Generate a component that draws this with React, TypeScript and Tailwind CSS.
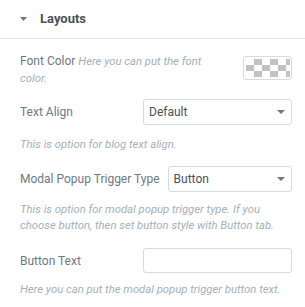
const font = { fontFamily: "Roboto, 'Liberation Sans', sans-serif" };

function Caret({ w = 8 }: { w?: number }) {
  return (
    <svg width={w} height="4" viewBox="0 0 8 4" preserveAspectRatio="none" className="shrink-0">
      <path d="M0 0h8L4 4z" fill="#6d7882" />
    </svg>
  );
}

function Checker() {
  const cells = [];
  for (let r = 0; r < 3; r++) {
    for (let c = 0; c < 6; c++) {
      if ((r + c) % 2 === 1) cells.push(<rect key={`${r}-${c}`} x={c * 8} y={r * 6} width="8" height="6" fill="#c2c2c2" />);
    }
  }
  return (
    <svg width="44" height="18" viewBox="0 0 44 18">
      {cells}
    </svg>
  );
}

function Select({ value }: { value: string }) {
  return (
    <div className="flex h-[26px] flex-1 items-center justify-between rounded-[3px] border border-[#d5dadf] bg-white pl-[5px] pr-[6px] text-[12px] text-[#495157]">
      <span>{value}</span>
      <Caret />
    </div>
  );
}

export default function App() {
  return (
    <div className="w-[305px] h-[307px] bg-white" style={font}>
      <div className="flex h-[39px] items-center gap-[13px] border-b border-[#e6e9ec] pl-5">
        <Caret w={7} />
        <span className="text-[13px] font-bold text-[#495157]">Layouts</span>
      </div>

      <div className="pl-5 pr-[13px] pt-[17px]">
        <div className="flex items-start justify-between">
          <p className="-mt-[3px] w-[190px] text-[12px] leading-[17px] text-[#6d7882]">
            Font Color{" "}
            <span className="text-[11.3px] italic text-[#a4afb7]">Here you can put the font color.</span>
          </p>
          <div className="flex h-[24px] w-[49px] items-center justify-center rounded-[3px] border border-[#d5dadf]">
            <Checker />
          </div>
        </div>

        <div className="mt-[12px] flex items-center">
          <span className="w-[123px] text-[12px] text-[#6d7882]">Text Align</span>
          <Select value="Default" />
        </div>
        <p className="mt-[12px] text-[11.3px] leading-[16px] italic text-[#a4afb7]">This is option for blog text align.</p>

        <div className="mt-[13px] flex items-center gap-[8px]">
          <span className="text-[12px] text-[#6d7882]">Modal Popup Trigger Type</span>
          <Select value="Button" />
        </div>
        <p className="mt-[10px] text-[11.3px] leading-[16px] italic text-[#a4afb7]">
          This is option for modal popup trigger type. If you choose button, then set button style with Button tab.
        </p>

        <div className="mt-[14px] flex items-center">
          <span className="w-[123px] text-[12px] text-[#6d7882]">Button Text</span>
          <div className="h-[25px] flex-1 rounded-[3px] border border-[#d5dadf]" />
        </div>
        <p className="mt-[9px] text-[11.3px] leading-[16px] italic text-[#a4afb7]">
          Here you can put the modal popup trigger button text.
        </p>
      </div>
    </div>
  );
}
